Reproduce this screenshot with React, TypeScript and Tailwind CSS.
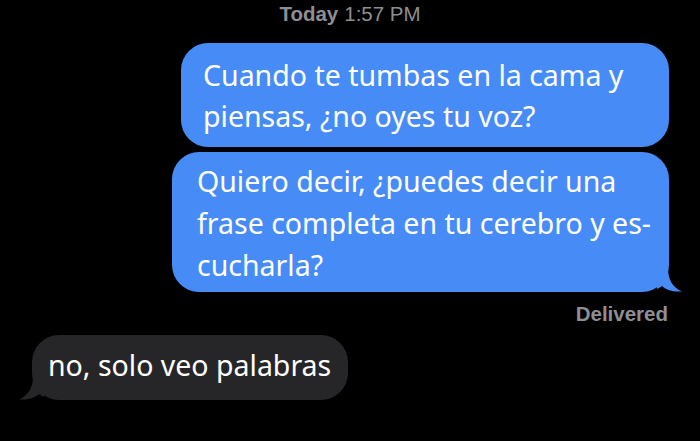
const BLUE = 'bg-[#478cf6]'

function RightTail() {
  return (
    <svg className="absolute right-[-14px] bottom-0" width="26" height="24" viewBox="0 0 26 24">
      <path d="M0 0 L11 0 C11 11 15 19 25 23.5 C16 24 9 22 5 18 C4 19 2 20 0 21 Z" fill="#478cf6" />
    </svg>
  )
}

function LeftTail() {
  return (
    <svg className="absolute left-[-14px] bottom-0" width="26" height="24" viewBox="0 0 26 24">
      <path d="M26 0 L15 0 C15 11 11 19 1 23.5 C10 24 17 22 21 18 C22 19 24 20 26 21 Z" fill="#262628" />
    </svg>
  )
}

export default function App() {
  return (
    <div
      className="w-[700px] h-[441px] bg-black overflow-hidden flex flex-col text-white"
      style={{ fontFamily: '"Noto Sans", "Open Sans", sans-serif' }}
    >
      <div
        className="h-[28px] flex items-center justify-center text-[20.5px] text-[#8e8e93] leading-none"
        style={{ fontFamily: '"Liberation Sans", Arial, sans-serif' }}
      >
        <span className="font-bold">Today</span>
        <span className="ml-[6px]">1:57 PM</span>
      </div>

      <div className={`self-end mr-[31px] mt-[15px] w-[488px] h-[104px] rounded-[27px] ${BLUE} pl-[22px] pt-[12px] text-[28.5px] leading-[41px] whitespace-nowrap`}>
        Cuando te tumbas en la cama y
        <br />
        piensas, ¿no oyes tu voz?
      </div>

      <div className={`relative self-end mr-[31px] mt-[5px] w-[497px] h-[140px] rounded-[27px] ${BLUE} pl-[25px] pt-[8px] text-[28.5px] leading-[42px] whitespace-nowrap`}>
        Quiero decir, ¿puedes decir una
        <br />
        frase completa en tu cerebro y es-
        <br />
        cucharla?
        <RightTail />
      </div>

      <div
        className="self-end mr-[32px] mt-[12px] text-[20.5px] font-bold text-[#8e8e93] leading-none"
        style={{ fontFamily: '"Liberation Sans", Arial, sans-serif' }}
      >
        Delivered
      </div>

      <div className="relative self-start ml-[32px] mt-[10px] w-[316px] h-[65px] rounded-[27px] bg-[#262628] pl-[16px] pb-[3px] flex items-center text-[28.5px] whitespace-nowrap">
        no, solo veo palabras
        <LeftTail />
      </div>
    </div>
  )
}
